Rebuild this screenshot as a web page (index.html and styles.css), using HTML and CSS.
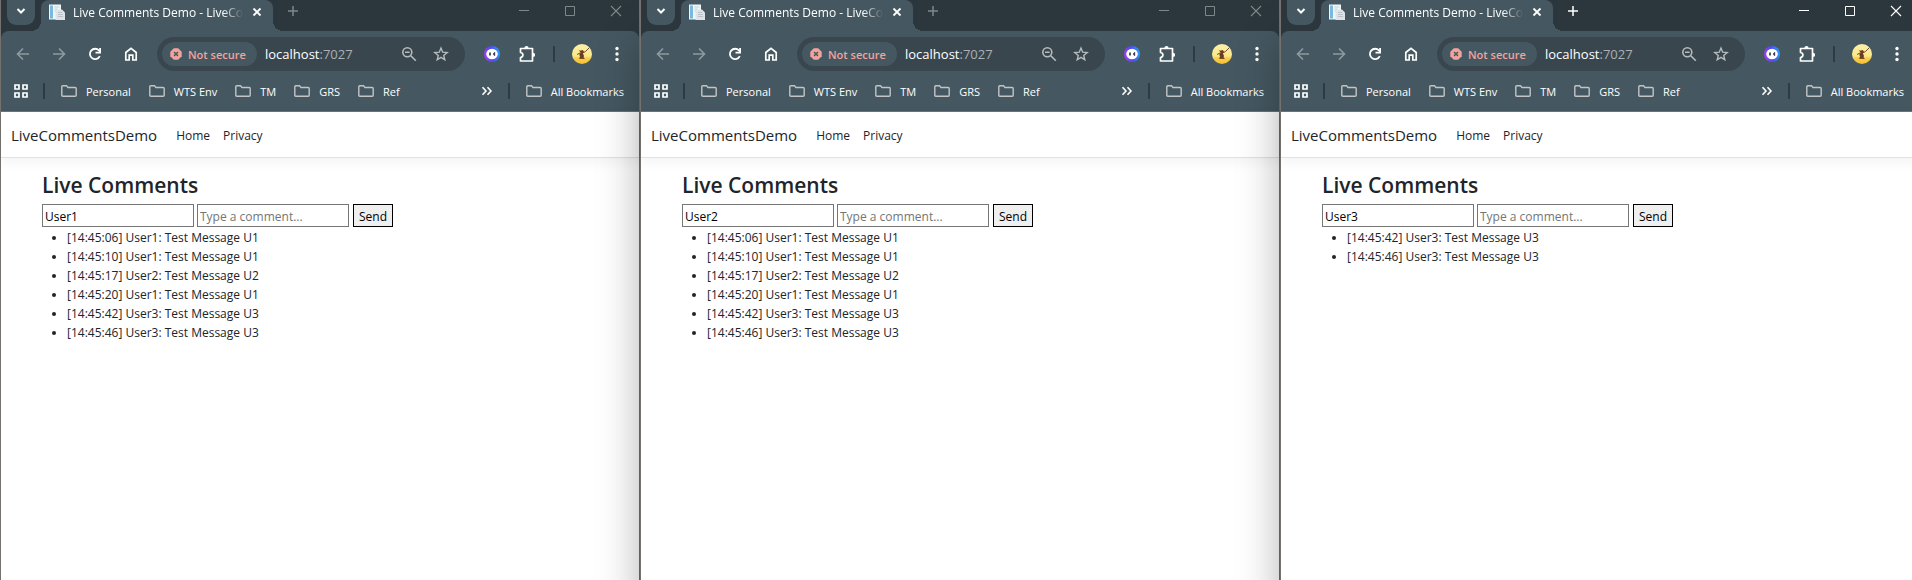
FILE: index.html
```html
<!DOCTYPE html>
<html lang="en">
<head>
<meta charset="utf-8">
<title>Live Comments Demo - LiveCommentsDemo</title>
<link rel="stylesheet" href="styles.css">
</head>
<body>
<svg class="sprite" aria-hidden="true">
  <defs>
    <linearGradient id="ring" x1="0" y1="0.6" x2="1" y2="0.4"><stop offset="0" stop-color="#a03df0"/><stop offset="0.5" stop-color="#4a4cf0"/><stop offset="1" stop-color="#2f9df5"/></linearGradient>
    <linearGradient id="sun" x1="0" y1="0" x2="0" y2="1"><stop offset="0" stop-color="#fbf0a8"/><stop offset="0.6" stop-color="#fae88c"/><stop offset="0.7" stop-color="#f7cf4c"/><stop offset="1" stop-color="#f5c032"/></linearGradient>
  </defs>
  <symbol id="chevron" viewBox="0 0 16 16"><path d="M4.500 6l3.500 3.500L11.500 6" fill="none" stroke="currentColor" stroke-width="2"/></symbol>
  <symbol id="page" viewBox="0 0 16 16"><path d="M0 .5h12v15H0z" fill="#f1f5f8"/><path d="M1 1.500h3v13H1z" fill="#7ab8de"/><path d="M5.500 3h5M5.500 5h3M5.500 7h2" stroke="#c3d0d9"/><path d="M8 5.500h5l3 3V16H6.500V10z" fill="#dfe3e6"/><path d="M9 8.500h4M9 10.500h5M9 12.500h5" stroke="#bcc3c8"/></symbol>
  <symbol id="close" viewBox="0 0 16 16"><path d="M4.500 4.500l7 7M11.500 4.500l-7 7" stroke="currentColor" stroke-width="1.800"/></symbol>
  <symbol id="plus" viewBox="0 0 16 16"><path d="M8 3v10M3 8h10" stroke="currentColor" stroke-width="1.500"/></symbol>
  <symbol id="min" viewBox="0 0 16 16"><path d="M3 7.500h10" stroke="currentColor"/></symbol>
  <symbol id="max" viewBox="0 0 16 16"><path d="M3.500 3.500h9v9h-9z" fill="none" stroke="currentColor"/></symbol>
  <symbol id="exit" viewBox="0 0 16 16"><path d="M3 3l10 10M13 3L3 13" stroke="currentColor" stroke-width="1.100"/></symbol>
  <symbol id="back" viewBox="0 0 16 16"><path d="M14 8H3M8 2.500L2.500 8 8 13.500" fill="none" stroke="currentColor" stroke-width="1.600"/></symbol>
  <symbol id="forward" viewBox="0 0 16 16"><path d="M2 8h11M8 2.500L13.500 8 8 13.500" fill="none" stroke="currentColor" stroke-width="1.600"/></symbol>
  <symbol id="reload" viewBox="0 0 16 16"><path d="M12.800 10.200A5.200 5.200 0 1 1 12 4.500l1 1" fill="none" stroke="currentColor" stroke-width="1.800"/><path d="M14 2v5.500H8.500V5.800h3.700V2z" fill="currentColor"/></symbol>
  <symbol id="home" viewBox="0 0 16 16"><path d="M2.800 14V6.500L8 2.300l5.200 4.200V14H9.800V9.200H6.200V14z" fill="none" stroke="currentColor" stroke-width="1.700"/></symbol>
  <symbol id="danger" viewBox="0 0 12 12"><path d="M3.800.3h4.400l3.500 3.500v4.400l-3.500 3.500H3.800L.3 8.200V3.800z" fill="currentColor"/><path d="M4 4l4 4M8 4L4 8" stroke="#455861" stroke-width="1.500"/></symbol>
  <symbol id="zoomout" viewBox="0 0 16 16"><circle cx="6.300" cy="6.300" r="4.500" fill="none" stroke="currentColor" stroke-width="1.600"/><path d="M9.800 9.800l5 5M4 6.300h4.600" stroke="currentColor" stroke-width="1.600"/></symbol>
  <symbol id="star" viewBox="0 0 16 16"><path d="M8 2l1.700 4.200 4.500.3-3.500 2.900 1.100 4.400L8 11.400l-3.800 2.400 1.100-4.400-3.500-2.900 4.500-.3z" fill="none" stroke="currentColor" stroke-width="1.400"/></symbol>
  <symbol id="ghost" viewBox="0 0 16 16"><circle cx="8" cy="8" r="8" fill="url(#ring)"/><ellipse cx="8" cy="8" rx="5.800" ry="5.200" fill="#fff"/><path d="M6 6.500v3" stroke="#222a44" stroke-width="1.600"/><path d="M11 6.500L9.700 8 11 9.500" fill="none" stroke="#222a44" stroke-width="1.300"/></symbol>
  <symbol id="puzzle" viewBox="0 0 18 18"><path d="M2.500 3.500h12v12.500h-12v-3.500c3.200-.5 3.200-4.500 0-5z" fill="none" stroke="currentColor" stroke-width="1.700" stroke-linejoin="round"/><path d="M6.400 3a2.100 2.100 0 0 1 4.200 0zM15 7.800a2.100 2.100 0 0 1 0 4.200z" fill="currentColor"/></symbol>
  <symbol id="avatar" viewBox="0 0 20 20"><circle cx="10" cy="10" r="10" fill="url(#sun)"/><path d="M6.500 5.500l1.500 1.200 2.500-.7 1.500 1.500-1 2 1 2.500-.5 1.200 1.500 1.800-6-.3 1-2-.7-2.300 1.200-2z" fill="#6d3a22"/><path d="M5 10.500l3-1.500M10.500 9l3-1.500 4-4" fill="none" stroke="#7c4a2c"/></symbol>
  <symbol id="dots" viewBox="0 0 16 16"><g fill="currentColor"><circle cx="8" cy="2.500" r="1.700"/><circle cx="8" cy="8" r="1.700"/><circle cx="8" cy="13.500" r="1.700"/></g></symbol>
  <symbol id="apps" viewBox="0 0 14 14"><path d="M1 1h4v4H1zM9 1h4v4H9zM1 9h4v4H1zM9 9h4v4H9z" fill="none" stroke="currentColor" stroke-width="1.700"/></symbol>
  <symbol id="folder" viewBox="0 0 16 12"><path d="M.8 10V1.800Q.8.800 1.800.800h3.700l1.500 1.700h7.200q1 0 1 1v6.700q0 1-1 1H1.800q-1 0-1-1z" fill="none" stroke="currentColor" stroke-width="1.400"/></symbol>
  <symbol id="more" viewBox="0 0 12 12"><path d="M1.500 2.200L5 6 1.500 9.800M6.500 2.200L10 6 6.500 9.800" fill="none" stroke="currentColor" stroke-width="1.600"/></symbol>
</svg>

<div class="desktop">
  <section class="window">
    <header class="titlebar">
      <button class="tab-search" aria-label="Search tabs"><svg class="i16"><use href="#chevron"/></svg></button>
      <div class="tab"><svg class="i16"><use href="#page"/></svg><span class="tab-title">Live Comments Demo - LiveCommentsDemo</span><button aria-label="Close tab"><svg class="i16"><use href="#close"/></svg></button></div>
      <button class="new-tab" aria-label="New tab"><svg class="i16"><use href="#plus"/></svg></button>
      <div class="controls"><button aria-label="Minimize"><svg class="i16"><use href="#min"/></svg></button><button aria-label="Maximize"><svg class="i16"><use href="#max"/></svg></button><button aria-label="Close"><svg class="i16"><use href="#exit"/></svg></button></div>
    </header>
    <div class="chrome">
      <div class="toolbar">
        <div class="nav-buttons"><button class="dim" aria-label="Back"><svg class="i16"><use href="#back"/></svg></button><button class="dim" aria-label="Forward"><svg class="i16"><use href="#forward"/></svg></button><button aria-label="Reload"><svg class="i16"><use href="#reload"/></svg></button><button aria-label="Home"><svg class="i16"><use href="#home"/></svg></button></div>
        <div class="omnibox"><button class="chip"><svg class="i12"><use href="#danger"/></svg>Not secure</button><span class="url">localhost<span class="port">:7027</span></span><button aria-label="Zoom"><svg class="i16"><use href="#zoomout"/></svg></button><button aria-label="Bookmark this tab"><svg class="i16"><use href="#star"/></svg></button></div>
        <div class="actions"><button aria-label="Assistant"><svg class="i16"><use href="#ghost"/></svg></button><button aria-label="Extensions"><svg class="i18"><use href="#puzzle"/></svg></button><span class="rule"></span><button aria-label="Profile"><svg class="i20"><use href="#avatar"/></svg></button><button aria-label="Menu"><svg class="i16"><use href="#dots"/></svg></button></div>
      </div>
      <nav class="bookmarks">
        <button aria-label="Apps"><svg class="i14"><use href="#apps"/></svg></button><span class="rule"></span>
        <a href="#"><svg class="folder"><use href="#folder"/></svg>Personal</a><a href="#"><svg class="folder"><use href="#folder"/></svg>WTS Env</a><a href="#"><svg class="folder"><use href="#folder"/></svg>TM</a><a href="#"><svg class="folder"><use href="#folder"/></svg>GRS</a><a href="#"><svg class="folder"><use href="#folder"/></svg>Ref</a>
        <button class="overflow" aria-label="More bookmarks"><svg class="i12"><use href="#more"/></svg></button><span class="rule"></span><a href="#"><svg class="folder"><use href="#folder"/></svg>All Bookmarks</a>
      </nav>
    </div>
    <nav class="site-nav"><a class="brand" href="#">LiveCommentsDemo</a><a href="#">Home</a><a href="#">Privacy</a></nav>
    <main>
      <h1>Live Comments</h1>
      <form><input type="text" aria-label="User" value="User1"><input type="text" aria-label="Comment" placeholder="Type a comment..."><button type="button">Send</button></form>
      <ul>
        <li>[14:45:06] User1: Test Message U1</li>
        <li>[14:45:10] User1: Test Message U1</li>
        <li>[14:45:17] User2: Test Message U2</li>
        <li>[14:45:20] User1: Test Message U1</li>
        <li>[14:45:42] User3: Test Message U3</li>
        <li>[14:45:46] User3: Test Message U3</li>
      </ul>
    </main>
  </section>

  <section class="window">
    <header class="titlebar">
      <button class="tab-search" aria-label="Search tabs"><svg class="i16"><use href="#chevron"/></svg></button>
      <div class="tab"><svg class="i16"><use href="#page"/></svg><span class="tab-title">Live Comments Demo - LiveCommentsDemo</span><button aria-label="Close tab"><svg class="i16"><use href="#close"/></svg></button></div>
      <button class="new-tab" aria-label="New tab"><svg class="i16"><use href="#plus"/></svg></button>
      <div class="controls"><button aria-label="Minimize"><svg class="i16"><use href="#min"/></svg></button><button aria-label="Maximize"><svg class="i16"><use href="#max"/></svg></button><button aria-label="Close"><svg class="i16"><use href="#exit"/></svg></button></div>
    </header>
    <div class="chrome">
      <div class="toolbar">
        <div class="nav-buttons"><button class="dim" aria-label="Back"><svg class="i16"><use href="#back"/></svg></button><button class="dim" aria-label="Forward"><svg class="i16"><use href="#forward"/></svg></button><button aria-label="Reload"><svg class="i16"><use href="#reload"/></svg></button><button aria-label="Home"><svg class="i16"><use href="#home"/></svg></button></div>
        <div class="omnibox"><button class="chip"><svg class="i12"><use href="#danger"/></svg>Not secure</button><span class="url">localhost<span class="port">:7027</span></span><button aria-label="Zoom"><svg class="i16"><use href="#zoomout"/></svg></button><button aria-label="Bookmark this tab"><svg class="i16"><use href="#star"/></svg></button></div>
        <div class="actions"><button aria-label="Assistant"><svg class="i16"><use href="#ghost"/></svg></button><button aria-label="Extensions"><svg class="i18"><use href="#puzzle"/></svg></button><span class="rule"></span><button aria-label="Profile"><svg class="i20"><use href="#avatar"/></svg></button><button aria-label="Menu"><svg class="i16"><use href="#dots"/></svg></button></div>
      </div>
      <nav class="bookmarks">
        <button aria-label="Apps"><svg class="i14"><use href="#apps"/></svg></button><span class="rule"></span>
        <a href="#"><svg class="folder"><use href="#folder"/></svg>Personal</a><a href="#"><svg class="folder"><use href="#folder"/></svg>WTS Env</a><a href="#"><svg class="folder"><use href="#folder"/></svg>TM</a><a href="#"><svg class="folder"><use href="#folder"/></svg>GRS</a><a href="#"><svg class="folder"><use href="#folder"/></svg>Ref</a>
        <button class="overflow" aria-label="More bookmarks"><svg class="i12"><use href="#more"/></svg></button><span class="rule"></span><a href="#"><svg class="folder"><use href="#folder"/></svg>All Bookmarks</a>
      </nav>
    </div>
    <nav class="site-nav"><a class="brand" href="#">LiveCommentsDemo</a><a href="#">Home</a><a href="#">Privacy</a></nav>
    <main>
      <h1>Live Comments</h1>
      <form><input type="text" aria-label="User" value="User2"><input type="text" aria-label="Comment" placeholder="Type a comment..."><button type="button">Send</button></form>
      <ul>
        <li>[14:45:06] User1: Test Message U1</li>
        <li>[14:45:10] User1: Test Message U1</li>
        <li>[14:45:17] User2: Test Message U2</li>
        <li>[14:45:20] User1: Test Message U1</li>
        <li>[14:45:42] User3: Test Message U3</li>
        <li>[14:45:46] User3: Test Message U3</li>
      </ul>
    </main>
  </section>

  <section class="window active">
    <header class="titlebar">
      <button class="tab-search" aria-label="Search tabs"><svg class="i16"><use href="#chevron"/></svg></button>
      <div class="tab"><svg class="i16"><use href="#page"/></svg><span class="tab-title">Live Comments Demo - LiveCommentsDemo</span><button aria-label="Close tab"><svg class="i16"><use href="#close"/></svg></button></div>
      <button class="new-tab" aria-label="New tab"><svg class="i16"><use href="#plus"/></svg></button>
      <div class="controls"><button aria-label="Minimize"><svg class="i16"><use href="#min"/></svg></button><button aria-label="Maximize"><svg class="i16"><use href="#max"/></svg></button><button aria-label="Close"><svg class="i16"><use href="#exit"/></svg></button></div>
    </header>
    <div class="chrome">
      <div class="toolbar">
        <div class="nav-buttons"><button class="dim" aria-label="Back"><svg class="i16"><use href="#back"/></svg></button><button class="dim" aria-label="Forward"><svg class="i16"><use href="#forward"/></svg></button><button aria-label="Reload"><svg class="i16"><use href="#reload"/></svg></button><button aria-label="Home"><svg class="i16"><use href="#home"/></svg></button></div>
        <div class="omnibox"><button class="chip"><svg class="i12"><use href="#danger"/></svg>Not secure</button><span class="url">localhost<span class="port">:7027</span></span><button aria-label="Zoom"><svg class="i16"><use href="#zoomout"/></svg></button><button aria-label="Bookmark this tab"><svg class="i16"><use href="#star"/></svg></button></div>
        <div class="actions"><button aria-label="Assistant"><svg class="i16"><use href="#ghost"/></svg></button><button aria-label="Extensions"><svg class="i18"><use href="#puzzle"/></svg></button><span class="rule"></span><button aria-label="Profile"><svg class="i20"><use href="#avatar"/></svg></button><button aria-label="Menu"><svg class="i16"><use href="#dots"/></svg></button></div>
      </div>
      <nav class="bookmarks">
        <button aria-label="Apps"><svg class="i14"><use href="#apps"/></svg></button><span class="rule"></span>
        <a href="#"><svg class="folder"><use href="#folder"/></svg>Personal</a><a href="#"><svg class="folder"><use href="#folder"/></svg>WTS Env</a><a href="#"><svg class="folder"><use href="#folder"/></svg>TM</a><a href="#"><svg class="folder"><use href="#folder"/></svg>GRS</a><a href="#"><svg class="folder"><use href="#folder"/></svg>Ref</a>
        <button class="overflow" aria-label="More bookmarks"><svg class="i12"><use href="#more"/></svg></button><span class="rule"></span><a href="#"><svg class="folder"><use href="#folder"/></svg>All Bookmarks</a>
      </nav>
    </div>
    <nav class="site-nav"><a class="brand" href="#">LiveCommentsDemo</a><a href="#">Home</a><a href="#">Privacy</a></nav>
    <main>
      <h1>Live Comments</h1>
      <form><input type="text" aria-label="User" value="User3"><input type="text" aria-label="Comment" placeholder="Type a comment..."><button type="button">Send</button></form>
      <ul>
        <li>[14:45:42] User3: Test Message U3</li>
        <li>[14:45:46] User3: Test Message U3</li>
      </ul>
    </main>
  </section>
</div>
</body>
</html>
```

FILE: styles.css
```css
:root {
  --frame: #2c373d;
  --bar: #455861;
  --field: #39464e;
  --edge: #75716f;
}
* { box-sizing: border-box; }
body { margin: 0; overflow: hidden; font: 12px/19px "Open Sans", "Noto Sans", sans-serif; color: #212529; }
a { color: inherit; text-decoration: none; }
button { padding: 0; border: 0; background: none; font: inherit; color: inherit; }
svg { display: block; flex: none; }
.sprite { position: absolute; width: 0; height: 0; }
.i12 { width: 12px; height: 12px; }
.i14 { width: 14px; height: 14px; }
.i16 { width: 16px; height: 16px; }
.i18 { width: 18px; height: 18px; }
.i20 { width: 20px; height: 20px; }
.folder { width: 16px; height: 12px; color: #c3c4c5; }

/* The last window runs 8px past the right edge of the desktop. */
.desktop { display: grid; grid-template-columns: repeat(3, 1fr); width: calc(100% + 8px); min-height: 100vh; }
.window { min-width: 0; background: #fff; border: solid var(--edge); border-width: 0 1px; box-shadow: 0 40px 40px rgba(0, 0, 0, 0.3); }

.titlebar { display: flex; align-items: flex-start; height: 31px; padding-left: 6px; background: var(--frame); color: #808789; }
.tab-search { display: grid; place-items: center; width: 28px; height: 25px; padding-bottom: 3px; border-radius: 0 0 9px 9px; background: var(--bar); color: #fff; }
.tab { position: relative; display: flex; align-items: center; width: 232px; height: 31px; margin-left: 6px; padding: 0 8px 7px; background: var(--bar); color: #fff; border-radius: 8px 8px 0 0; }
.tab::before, .tab::after { content: ""; position: absolute; bottom: 0; width: 10px; height: 10px; }
.tab::before { right: 100%; background: radial-gradient(circle at 0 0, transparent 10px, var(--bar) 10px); }
.tab::after { left: 100%; background: radial-gradient(circle at 100% 0, transparent 10px, var(--bar) 10px); }
.tab-title { flex: 1; margin: 0 6px 0 8px; overflow: hidden; white-space: nowrap; -webkit-mask-image: linear-gradient(90deg, #000 88%, transparent); mask-image: linear-gradient(90deg, #000 88%, transparent); }
.new-tab { margin: 3px 0 0 12px; }
.controls { display: flex; gap: 30px; margin: 3px 15px 0 auto; }
.active .titlebar { color: #fff; }

.chrome { background: linear-gradient(var(--frame) 10px, var(--bar) 10px); border-bottom: 1px solid #667780; color: #fff; }
.toolbar { display: flex; align-items: center; height: 43px; padding: 3px 14px 0; background: var(--bar); border-radius: 8px 8px 0 0; }
.nav-buttons { display: flex; gap: 20px; }
.dim { color: #8f9a9f; }
.omnibox { flex: 1; display: flex; align-items: center; gap: 16px; height: 34px; margin: 0 18px; padding: 0 16px 0 5px; border-radius: 17px; background: var(--field); color: #b5babd; }
.chip { display: flex; align-items: center; gap: 6px; width: 95px; height: 24px; padding-left: 8px; border-radius: 12px; background: var(--bar); color: #f2a49c; font-weight: 600; font-size: 11px; white-space: nowrap; }
.url { flex: 1; margin-left: -8px; font-size: 13px; color: #fff; }
.port { color: #aab0b3; }
.actions { display: flex; align-items: center; gap: 17px; }
.actions button { display: grid; place-items: center; min-width: 18px; }
.actions button:last-child { min-width: 16px; }
.rule { width: 2px; height: 16px; background: #2f3b42; }

.bookmarks { display: flex; align-items: center; height: 37px; padding: 0 15px 3px 13px; font-size: 11px; }
.bookmarks a { display: flex; align-items: center; gap: 9px; margin-right: 18px; white-space: nowrap; }
.bookmarks .rule { margin: 0 16px 0 15px; }
.bookmarks a:last-child { margin-right: 0; }
.overflow { margin-left: auto; }

.site-nav { display: flex; align-items: center; gap: 13px; height: 46px; padding: 1px 10px 0; border-bottom: 1px solid #dee2e6; box-shadow: 0 4px 12px rgba(0, 0, 0, 0.05); }
.brand { margin-right: 6px; font-size: 15px; }

main { padding: 14px 41px; }
h1 { margin: 0 0 5px; font-size: 21px; line-height: 27px; font-weight: 600; }
form { display: flex; gap: 3px; }
input { width: 152px; height: 23px; padding: 2px 2px 0; border: 1px solid #767676; border-radius: 0; background: #fff; color: #000; font: inherit; }
input::placeholder { color: #757575; }
form button { width: 40px; height: 23px; margin-left: 1px; padding-top: 1px; border: 1px solid #000; background: #efefef; color: #000; }
ul { margin: 0; padding: 1px 0 0 25px; }
```
